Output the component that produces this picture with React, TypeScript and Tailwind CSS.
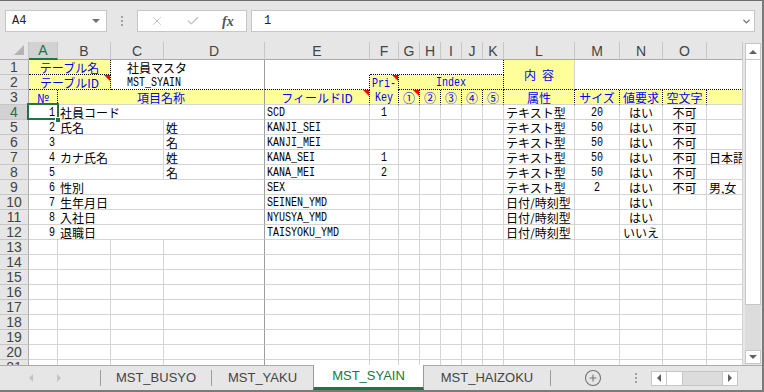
import type { ReactNode } from "react";
import { X, Check, ChevronDown, CirclePlus } from "lucide-react";

const jp = "font-['Noto_Sans_CJK_JP',sans-serif] text-[12px] leading-[13px]";
const mono = "font-['Liberation_Mono',monospace] text-[10px] leading-[12px]";
const ui = "font-['Liberation_Sans',sans-serif]";
const c = "h-full shrink-0 flex items-center overflow-hidden whitespace-nowrap";

// borders: dotted black for the header block, light grid, darker freeze line
const dR = "[border-right:1px_dotted_#000]";
const dB = "[border-bottom:1px_dotted_#000]";
const gR = "border-r border-r-[#d4d4d4]";
const gB = "border-b border-b-[#d4d4d4]";
const fR = "border-r border-r-[#9e9e9e]";
const yellow = "bg-[#ffff99]";
const blue = "text-[#0000ff]";

const cols: [string, string][] = [
  ["A", "w-[29px]"],
  ["B", "w-[53px]"],
  ["C", "w-[53px]"],
  ["D", "w-[101px]"],
  ["E", "w-[105px]"],
  ["F", "w-[29px]"],
  ["G", "w-[21px]"],
  ["H", "w-[21px]"],
  ["I", "w-[21px]"],
  ["J", "w-[21px]"],
  ["K", "w-[21px]"],
  ["L", "w-[71px]"],
  ["M", "w-[45px]"],
  ["N", "w-[43px]"],
  ["O", "w-[44px]"],
  ["", "w-[36px]"],
];

type Item = {
  n: string;
  b?: string;
  d?: string;
  split?: boolean;
  e: string;
  f?: string;
  l: string;
  m?: string;
  req?: string;
  o?: string;
  p?: string;
};

const items: Item[] = [
  { n: "1", b: "社員コード", e: "SCD", f: "1", l: "テキスト型", m: "20", req: "はい", o: "不可" },
  { n: "2", b: "氏名", d: "姓", split: true, e: "KANJI_SEI", l: "テキスト型", m: "50", req: "はい", o: "不可" },
  { n: "3", d: "名", split: true, e: "KANJI_MEI", l: "テキスト型", m: "50", req: "はい", o: "不可" },
  { n: "4", b: "カナ氏名", d: "姓", split: true, e: "KANA_SEI", f: "1", l: "テキスト型", m: "50", req: "はい", o: "不可", p: "日本語" },
  { n: "5", d: "名", split: true, e: "KANA_MEI", f: "2", l: "テキスト型", m: "50", req: "はい", o: "不可" },
  { n: "6", b: "性別", e: "SEX", l: "テキスト型", m: "2", req: "はい", o: "不可", p: "男,女" },
  { n: "7", b: "生年月日", e: "SEINEN_YMD", l: "日付/時刻型", req: "はい" },
  { n: "8", b: "入社日", e: "NYUSYA_YMD", l: "日付/時刻型", req: "はい" },
  { n: "9", b: "退職日", e: "TAISYOKU_YMD", l: "日付/時刻型", req: "いいえ" },
];

// half-width text in the sheet is narrow and tall, like MS Gothic
function T({ children }: { children?: ReactNode }) {
  return <span className="inline-block scale-y-[1.25] translate-y-[1px]">{children}</span>;
}

function Tri() {
  return (
    <span className="absolute top-0 right-0 w-0 h-0 border-l-[6px] border-l-transparent border-t-[6px] border-t-[#ff0000]" />
  );
}

function RowHead({ n, sel = false }: { n: string; sel?: boolean }) {
  return (
    <div
      className={`w-[29px] h-[15px] shrink-0 flex items-center justify-center border-r border-b border-r-[#ababab] border-b-[#c6c6c6] text-[14px] leading-none ${ui} ${
        sel ? "bg-[#d2d2d2] text-[#217346]" : "bg-[#e6e6e6] text-[#444]"
      }`}
    >
      {n}
    </div>
  );
}

function DataRow({ it, row }: { it: Item; row: number }) {
  const sel = row === 4;
  return (
    <div className="flex h-[15px] shrink-0">
      <RowHead n={String(row)} sel={sel} />
      <div className={`relative w-[29px] h-full shrink-0 flex items-center justify-end pr-[3px] ${gB} ${mono}`}>
        <T>{it.n}</T>
        {sel && (
          <>
            <span className="absolute -left-[2px] -top-[2px] w-[32px] h-[17px] border-2 border-[#217346] z-10" />
            <span className="absolute left-[26px] top-[12px] w-[6px] h-[6px] bg-[#217346] border border-white z-10" />
          </>
        )}
      </div>
      {it.split ? (
        <>
          <div className={`w-[106px] ${c} ${gR} ${gB} pl-[2px] ${jp}`}>{it.b}</div>
          <div className={`w-[101px] ${c} ${fR} ${gB} pl-[2px] ${jp}`}>{it.d}</div>
        </>
      ) : (
        <div className={`w-[207px] ${c} ${fR} ${gB} pl-[2px] ${jp}`}>{it.b}</div>
      )}
      <div className={`w-[105px] ${c} ${gR} ${gB} pl-[2px] ${mono}`}>
        <T>{it.e}</T>
      </div>
      <div className={`w-[29px] ${c} ${gR} ${gB} justify-center ${mono}`}>
        <T>{it.f}</T>
      </div>
      <div className={`w-[21px] ${c} ${gR} ${gB}`} />
      <div className={`w-[21px] ${c} ${gR} ${gB}`} />
      <div className={`w-[21px] ${c} ${gR} ${gB}`} />
      <div className={`w-[21px] ${c} ${gR} ${gB}`} />
      <div className={`w-[21px] ${c} ${gR} ${gB}`} />
      <div className={`w-[71px] ${c} ${gR} ${gB} pl-[2px] ${jp}`}>{it.l}</div>
      <div className={`w-[45px] ${c} ${gR} ${gB} justify-center ${mono}`}>
        <T>{it.m}</T>
      </div>
      <div className={`w-[43px] ${c} ${gR} ${gB} justify-center ${jp}`}>{it.req}</div>
      <div className={`w-[44px] ${c} ${gR} ${gB} justify-center ${jp}`}>{it.o}</div>
      <div className={`w-[36px] ${c} ${gR} ${gB} pl-[2px] ${jp}`}>{it.p}</div>
    </div>
  );
}

function EmptyRow({ row }: { row: number }) {
  return (
    <div className="flex h-[15px] shrink-0">
      <RowHead n={String(row)} />
      {cols.map(([k, w]) => (
        <div key={k + w} className={`${w} h-full shrink-0 ${gB} ${k === "D" ? fR : gR}`} />
      ))}
    </div>
  );
}

function VScroll() {
  return (
    <div className="w-[19px] h-full shrink-0 bg-[#e6e6e6] flex flex-col pl-[2px] pr-[1px] pt-[1px]">
      <div className="h-[17px] bg-white border border-[#c6c6c6] flex items-center justify-center">
        <span className="w-0 h-0 border-x-[4px] border-x-transparent border-b-[4px] border-b-[#606060]" />
      </div>
      <div className="h-[245px] bg-white border border-[#c6c6c6] border-t-0" />
      <div className="flex-1 bg-[#dcdcdc]" />
      <div className="h-[14px] bg-white border border-[#c6c6c6] flex items-center justify-center">
        <span className="w-0 h-0 border-x-[4px] border-x-transparent border-t-[4px] border-t-[#606060]" />
      </div>
      <div className="h-[1px]" />
    </div>
  );
}

export default function App() {
  return (
    <div className="w-[764px] h-[392px] bg-[#e6e6e6] flex flex-col border-r-2 border-r-[#7a7a7a] border-b-2 border-b-[#7a7a7a] overflow-hidden">
      {/* formula bar */}
      <div className="h-[42px] shrink-0 border-t border-t-[#6d6d6d] flex items-start pt-[9px] pl-[5px]">
        <div className="w-[102px] h-[22px] bg-white border border-[#c6c6c6] flex items-center justify-between pl-[6px] pr-[6px]">
          <span className="font-['Liberation_Mono',monospace] text-[12px] text-[#222]">A4</span>
          <span className="w-0 h-0 border-x-[4px] border-x-transparent border-t-[4px] border-t-[#707070]" />
        </div>
        <div className="w-[30px] h-[22px] flex flex-col items-center justify-center gap-[2px]">
          <span className="w-[2px] h-[2px] bg-[#a0a0a0]" />
          <span className="w-[2px] h-[2px] bg-[#a0a0a0]" />
          <span className="w-[2px] h-[2px] bg-[#a0a0a0]" />
        </div>
        <div className="w-[110px] h-[22px] bg-white border border-[#c6c6c6] flex items-center pl-[12px]">
          <X size={14} strokeWidth={1.6} className="text-[#c2c2c2]" />
          <Check size={14} strokeWidth={2.2} className="text-[#c2c2c2] ml-[22px]" />
          <span className="ml-[22px] font-['Liberation_Serif',serif] italic font-bold text-[14px] text-[#555]">fx</span>
        </div>
        <div className="ml-[4px] w-[504px] h-[22px] bg-white border border-[#c6c6c6] flex items-center justify-between pl-[12px] pr-[2px]">
          <span className="font-['Liberation_Mono',monospace] text-[12px] text-[#222]">1</span>
          <ChevronDown size={11} strokeWidth={3} className="text-[#707070]" />
        </div>
      </div>

      {/* sheet */}
      <div className="flex h-[323px] shrink-0 bg-white">
        <div className="w-[743px] h-full flex flex-col overflow-hidden">
          {/* column header */}
          <div className="flex h-[18px] shrink-0 bg-[#e6e6e6]">
            <div className="w-[29px] h-full shrink-0 flex items-end justify-end pr-[4px] pb-[4px] border-r border-b border-r-[#c6c6c6] border-b-[#ababab]">
              <span className="w-0 h-0 border-l-[10px] border-l-transparent border-b-[10px] border-b-[#b4b4b4]" />
            </div>
            {cols.map(([k, w]) =>
              k === "A" ? (
                <div
                  key={k}
                  className={`${w} h-full shrink-0 flex items-center justify-center bg-[#d2d2d2] border-r border-r-[#c6c6c6] border-b-2 border-b-[#217346] text-[14px] leading-none text-[#217346] ${ui}`}
                >
                  {k}
                </div>
              ) : (
                <div
                  key={k + w}
                  className={`${w} h-full shrink-0 flex items-center justify-center border-r border-b border-r-[#c6c6c6] border-b-[#ababab] text-[14px] leading-none text-[#444] ${ui}`}
                >
                  {k}
                </div>
              )
            )}
          </div>

          {/* rows 1-2 */}
          <div className="flex h-[30px] shrink-0">
            <div className="flex flex-col w-[29px] shrink-0">
              <RowHead n="1" />
              <RowHead n="2" />
            </div>
            <div className="flex flex-col w-[475px] shrink-0">
              <div className="flex h-[15px]">
                <div className={`w-[82px] ${c} ${yellow} ${dR} ${dB} justify-center ${blue} ${jp}`}>テーブル名</div>
                <div className={`w-[154px] ${c} ${fR} pl-[16px] ${jp}`}>社員マスタ</div>
                <div className={`w-[105px] ${c}`} />
                <div className={`w-[134px] ${c} ${dR} ${dB}`} />
              </div>
              <div className="flex h-[15px]">
                <div className={`relative w-[82px] ${c} ${yellow} ${dR} ${dB} justify-center ${blue} ${jp}`}>
                  テーブルID
                  <Tri />
                </div>
                <div className={`w-[154px] ${c} ${fR} ${dB} pl-[16px] ${mono}`}>
                  <T>MST_SYAIN</T>
                </div>
                <div className={`w-[105px] ${c} ${dR} ${dB}`} />
                <div className={`relative w-[29px] ${c} ${yellow} ${dR} justify-center ${blue} ${mono}`}>
                  <T>Pri-</T>
                  <Tri />
                </div>
                <div className={`w-[105px] ${c} ${yellow} ${dR} ${dB} justify-center ${blue} ${mono}`}>
                  <T>Index</T>
                </div>
              </div>
            </div>
            <div className={`w-[71px] ${c} ${yellow} ${gR} ${dB} justify-center ${blue} ${jp}`}>内&ensp;容</div>
            <div className={`w-[168px] ${c} ${gR} ${dB}`} />
          </div>

          {/* row 3 */}
          <div className="flex h-[15px] shrink-0">
            <RowHead n="3" />
            <div className={`w-[29px] ${c} ${yellow} ${dR} ${gB} justify-center ${blue} ${jp}`}>№</div>
            <div className={`w-[207px] ${c} ${yellow} ${fR} ${gB} justify-center ${blue} ${jp}`}>項目名称</div>
            <div className={`relative w-[105px] ${c} ${yellow} ${dR} ${gB} justify-center ${blue} ${jp}`}>
              フィールドID
              <Tri />
            </div>
            <div className={`w-[29px] ${c} ${yellow} ${dR} ${gB} justify-center ${blue} ${mono}`}>
              <T>Key</T>
            </div>
            <div className={`relative w-[21px] ${c} ${yellow} ${dR} ${gB} justify-center ${blue} ${jp}`}>
              ①
              <Tri />
            </div>
            <div className={`w-[21px] ${c} ${yellow} ${dR} ${gB} justify-center ${blue} ${jp}`}>②</div>
            <div className={`w-[21px] ${c} ${yellow} ${dR} ${gB} justify-center ${blue} ${jp}`}>③</div>
            <div className={`w-[21px] ${c} ${yellow} ${dR} ${gB} justify-center ${blue} ${jp}`}>④</div>
            <div className={`w-[21px] ${c} ${yellow} ${dR} ${gB} justify-center ${blue} ${jp}`}>⑤</div>
            <div className={`w-[71px] ${c} ${yellow} ${dR} ${gB} justify-center ${blue} ${jp}`}>属性</div>
            <div className={`w-[45px] ${c} ${yellow} ${dR} ${gB} justify-center ${blue} ${jp}`}>サイズ</div>
            <div className={`w-[43px] ${c} ${yellow} ${dR} ${gB} justify-center ${blue} ${jp}`}>値要求</div>
            <div className={`w-[44px] ${c} ${yellow} ${dR} ${gB} justify-center ${blue} ${jp}`}>空文字</div>
            <div className={`w-[36px] ${c} ${yellow} ${gR} ${gB}`} />
          </div>

          {items.map((it, i) => (
            <DataRow key={it.n} it={it} row={i + 4} />
          ))}
          {[13, 14, 15, 16, 17, 18, 19, 20, 21].map((r) => (
            <EmptyRow key={r} row={r} />
          ))}
        </div>
        <VScroll />
      </div>

      {/* sheet tabs */}
      <div className={`h-[25px] shrink-0 flex border-t border-t-[#ababab] text-[13px] text-[#444] ${ui}`}>
        <div className="w-[100px] h-full flex items-center pl-[29px] gap-[24px]">
          <span className="w-0 h-0 border-y-[4px] border-y-transparent border-r-[4px] border-r-[#c4c4c4]" />
          <span className="w-0 h-0 border-y-[4px] border-y-transparent border-l-[4px] border-l-[#c4c4c4]" />
        </div>
        <div className="h-full flex items-center">
          <span className="w-px h-[16px] bg-[#9b9b9b]" />
        </div>
        <div className="w-[110px] h-full flex items-center justify-center">MST_BUSYO</div>
        <div className="h-full flex items-center">
          <span className="w-px h-[16px] bg-[#9b9b9b]" />
        </div>
        <div className="w-[101px] h-full flex items-center justify-center">MST_YAKU</div>
        <div className="w-[111px] h-[25px] -mt-px bg-white border-x border-x-[#9b9b9b] border-b-[3px] border-b-[#217346] flex items-center justify-center text-[#217346]">
          MST_SYAIN
        </div>
        <div className="w-[126px] h-full flex items-center justify-center">MST_HAIZOKU</div>
        <div className="h-full flex items-center">
          <span className="w-px h-[16px] bg-[#9b9b9b]" />
        </div>
        <div className="w-[84px] h-full flex items-center justify-center">
          <CirclePlus size={18} strokeWidth={1.4} className="text-[#707070]" />
        </div>
        <div className="h-full flex flex-col items-center justify-center gap-[2px]">
          <span className="w-[2px] h-[2px] bg-[#a0a0a0]" />
          <span className="w-[2px] h-[2px] bg-[#a0a0a0]" />
          <span className="w-[2px] h-[2px] bg-[#a0a0a0]" />
        </div>
        <div className="ml-[14px] h-full flex items-center">
          <div className="w-[87px] h-[15px] flex bg-[#dcdcdc] border border-[#c6c6c6]">
            <div className="w-[15px] h-full bg-white border-r border-r-[#c6c6c6] flex items-center justify-center">
              <span className="w-0 h-0 border-y-[4px] border-y-transparent border-r-[4px] border-r-[#606060]" />
            </div>
            <div className="w-[16px] h-full bg-white border-r border-r-[#c6c6c6]" />
            <div className="flex-1" />
            <div className="w-[15px] h-full bg-white border-l border-l-[#c6c6c6] flex items-center justify-center">
              <span className="w-0 h-0 border-y-[4px] border-y-transparent border-l-[4px] border-l-[#606060]" />
            </div>
          </div>
        </div>
      </div>
    </div>
  );
}
